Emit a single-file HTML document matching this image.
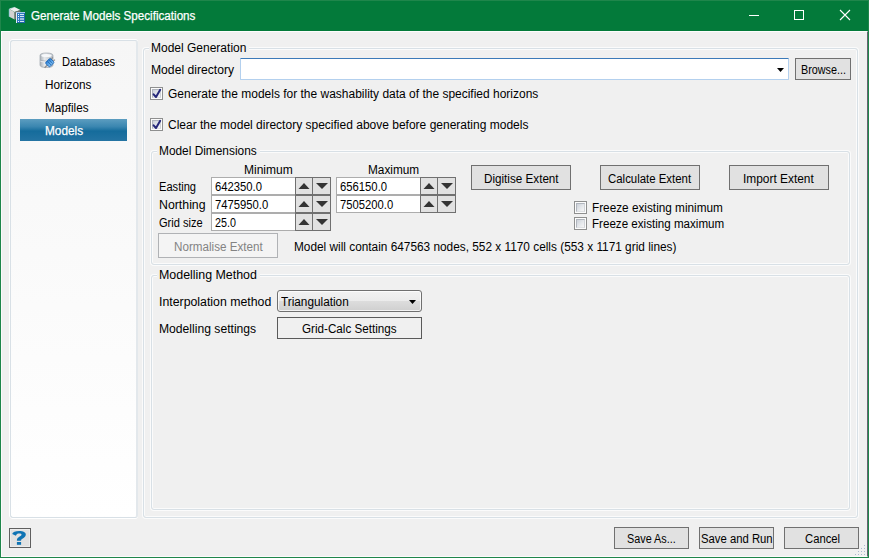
<!DOCTYPE html>
<html><head><meta charset="utf-8"><style>
html,body{margin:0;padding:0;width:869px;height:558px;overflow:hidden;background:#f0f0f0}
.b{position:absolute}
.t{position:absolute;white-space:nowrap;font-family:"Liberation Sans",sans-serif;font-size:12px;line-height:14px;transform-origin:0 0}
</style></head><body>
<div class="b" style="left:0px;top:0px;width:869px;height:558px;background:#1f864b"></div>
<div class="b" style="left:1px;top:1px;width:867px;height:30px;background:#037a3a"></div>
<div class="b" style="left:1px;top:31px;width:867px;height:526px;background:#f0f0f0;border-left:1px solid #fbfbfb;border-top:1px solid #fdfdfd;border-bottom:1px solid #fbfbfb;border-right:1px solid #646470;box-sizing:border-box"></div>
<div class="b" style="left:749px;top:15px;width:10px;height:1px;background:#fff"></div>
<div class="b" style="left:794px;top:10px;width:10px;height:10px;border:1px solid #fff;box-sizing:border-box"></div>
<svg class="b" style="left:838px;top:8px" width="14" height="14"><path d="M2 2 L12 12 M12 2 L2 12" stroke="#fff" stroke-width="1.1"/></svg>
<div class="b" style="left:10px;top:40px;width:128px;height:478px;background:linear-gradient(#f6f6f6,#ffffff);border:1px solid #d8e0e6;border-right:2px solid #e3e8ec;border-radius:3px;box-sizing:border-box;box-shadow:-1px 0 0 #fff,0 -1px 0 #fff,0 1px 0 #fff"></div>
<div class="b" style="left:20px;top:119px;width:107px;height:22px;background:linear-gradient(#5c9dc0 0%,#3a86b0 35%,#156c9c 55%,#2474a3 100%)"></div>
<div class="b" style="left:143px;top:48px;width:715px;height:470px;border:1px solid #d8e0e6;border-radius:3px;box-sizing:border-box;box-shadow:inset 0 0 0 1px #fbfbfb, 0 0 0 1px #fbfbfb"></div>
<div class="b" style="left:151px;top:151px;width:699px;height:114px;border:1px solid #d8e0e6;border-radius:3px;box-sizing:border-box;box-shadow:inset 0 0 0 1px #fbfbfb, 0 0 0 1px #fbfbfb"></div>
<div class="b" style="left:151px;top:275px;width:699px;height:235px;border:1px solid #d8e0e6;border-radius:3px;box-sizing:border-box;box-shadow:inset 0 0 0 1px #fbfbfb, 0 0 0 1px #fbfbfb"></div>
<div class="b" style="left:149px;top:40px;width:100px;height:16px;background:#f0f0f0"></div>
<div class="b" style="left:157px;top:143px;width:103px;height:15px;background:#f0f0f0"></div>
<div class="b" style="left:157px;top:269px;width:103px;height:15px;background:#f0f0f0"></div>
<div class="b" style="left:240px;top:58px;width:549px;height:22px;background:#fff;border:1px solid #b3d0ee;box-sizing:border-box;border-top-color:#3c7ab9;border-radius:1px"></div>
<svg class="b" style="left:777px;top:68px" width="8" height="5"><path d="M0 0 H7 L3.5 4 Z" fill="#000"/></svg>
<div class="b" style="left:795px;top:58px;width:56px;height:22px;background:#e1e1e1;border:1px solid #707070;box-sizing:border-box"></div>
<div class="b" style="left:150px;top:87px;width:13px;height:13px;background:#fcfcfc;border:1px solid #8e8f8f;box-sizing:border-box"></div><div class="b" style="left:152px;top:89px;width:9px;height:9px;background:linear-gradient(135deg,#ccd1d9 0%,#e3e6ea 50%,#f6f6f6 100%);border:1px solid;border-color:#b0b5bd #d0d3d8 #dfe1e4 #b0b5bd;box-sizing:border-box"></div><svg class="b" style="left:150px;top:87px" width="13" height="13"><path d="M3.6 7.3 L6 10 L10.2 2.8" stroke="#26287a" stroke-width="2" fill="none" stroke-linecap="round" stroke-linejoin="round"/></svg>
<div class="b" style="left:150px;top:118px;width:13px;height:13px;background:#fcfcfc;border:1px solid #8e8f8f;box-sizing:border-box"></div><div class="b" style="left:152px;top:120px;width:9px;height:9px;background:linear-gradient(135deg,#ccd1d9 0%,#e3e6ea 50%,#f6f6f6 100%);border:1px solid;border-color:#b0b5bd #d0d3d8 #dfe1e4 #b0b5bd;box-sizing:border-box"></div><svg class="b" style="left:150px;top:118px" width="13" height="13"><path d="M3.6 7.3 L6 10 L10.2 2.8" stroke="#26287a" stroke-width="2" fill="none" stroke-linecap="round" stroke-linejoin="round"/></svg>
<div class="b" style="left:574px;top:201px;width:13px;height:13px;background:#fcfcfc;border:1px solid #8e8f8f;box-sizing:border-box"></div><div class="b" style="left:576px;top:203px;width:9px;height:9px;background:linear-gradient(135deg,#ccd1d9 0%,#e3e6ea 50%,#f6f6f6 100%);border:1px solid;border-color:#b0b5bd #d0d3d8 #dfe1e4 #b0b5bd;box-sizing:border-box"></div>
<div class="b" style="left:574px;top:217px;width:13px;height:13px;background:#fcfcfc;border:1px solid #8e8f8f;box-sizing:border-box"></div><div class="b" style="left:576px;top:219px;width:9px;height:9px;background:linear-gradient(135deg,#ccd1d9 0%,#e3e6ea 50%,#f6f6f6 100%);border:1px solid;border-color:#b0b5bd #d0d3d8 #dfe1e4 #b0b5bd;box-sizing:border-box"></div>
<div class="b" style="left:211px;top:177px;width:85px;height:18px;background:#fff;border:1px solid #adadad;box-sizing:border-box"></div><div class="b" style="left:295px;top:177px;width:18px;height:18px;background:#e1e1e1;border:1px solid #707070;box-sizing:border-box"></div><div class="b" style="left:312px;top:177px;width:19px;height:18px;background:#e1e1e1;border:1px solid #707070;box-sizing:border-box"></div><svg class="b" style="left:298px;top:183px" width="13" height="8"><path d="M0.5 6 H11.5 L6 0 Z" fill="#333"/></svg><svg class="b" style="left:316px;top:183px" width="13" height="8"><path d="M0 0 H12 L6 6 Z" fill="#333"/></svg>
<div class="b" style="left:211px;top:195px;width:85px;height:18px;background:#fff;border:1px solid #adadad;box-sizing:border-box"></div><div class="b" style="left:295px;top:195px;width:18px;height:18px;background:#e1e1e1;border:1px solid #707070;box-sizing:border-box"></div><div class="b" style="left:312px;top:195px;width:19px;height:18px;background:#e1e1e1;border:1px solid #707070;box-sizing:border-box"></div><svg class="b" style="left:298px;top:201px" width="13" height="8"><path d="M0.5 6 H11.5 L6 0 Z" fill="#333"/></svg><svg class="b" style="left:316px;top:201px" width="13" height="8"><path d="M0 0 H12 L6 6 Z" fill="#333"/></svg>
<div class="b" style="left:211px;top:213px;width:85px;height:18px;background:#fff;border:1px solid #adadad;box-sizing:border-box"></div><div class="b" style="left:295px;top:213px;width:18px;height:18px;background:#e1e1e1;border:1px solid #707070;box-sizing:border-box"></div><div class="b" style="left:312px;top:213px;width:19px;height:18px;background:#e1e1e1;border:1px solid #707070;box-sizing:border-box"></div><svg class="b" style="left:298px;top:219px" width="13" height="8"><path d="M0.5 6 H11.5 L6 0 Z" fill="#333"/></svg><svg class="b" style="left:316px;top:219px" width="13" height="8"><path d="M0 0 H12 L6 6 Z" fill="#333"/></svg>
<div class="b" style="left:336px;top:177px;width:85px;height:18px;background:#fff;border:1px solid #adadad;box-sizing:border-box"></div><div class="b" style="left:420px;top:177px;width:18px;height:18px;background:#e1e1e1;border:1px solid #707070;box-sizing:border-box"></div><div class="b" style="left:437px;top:177px;width:19px;height:18px;background:#e1e1e1;border:1px solid #707070;box-sizing:border-box"></div><svg class="b" style="left:423px;top:183px" width="13" height="8"><path d="M0.5 6 H11.5 L6 0 Z" fill="#333"/></svg><svg class="b" style="left:441px;top:183px" width="13" height="8"><path d="M0 0 H12 L6 6 Z" fill="#333"/></svg>
<div class="b" style="left:336px;top:195px;width:85px;height:18px;background:#fff;border:1px solid #adadad;box-sizing:border-box"></div><div class="b" style="left:420px;top:195px;width:18px;height:18px;background:#e1e1e1;border:1px solid #707070;box-sizing:border-box"></div><div class="b" style="left:437px;top:195px;width:19px;height:18px;background:#e1e1e1;border:1px solid #707070;box-sizing:border-box"></div><svg class="b" style="left:423px;top:201px" width="13" height="8"><path d="M0.5 6 H11.5 L6 0 Z" fill="#333"/></svg><svg class="b" style="left:441px;top:201px" width="13" height="8"><path d="M0 0 H12 L6 6 Z" fill="#333"/></svg>
<div class="b" style="left:471px;top:165px;width:100px;height:25px;background:#e1e1e1;border:1px solid #707070;box-sizing:border-box"></div>
<div class="b" style="left:600px;top:165px;width:100px;height:25px;background:#e1e1e1;border:1px solid #707070;box-sizing:border-box"></div>
<div class="b" style="left:729px;top:165px;width:100px;height:25px;background:#e1e1e1;border:1px solid #707070;box-sizing:border-box"></div>
<div class="b" style="left:158px;top:233px;width:120px;height:25px;background:#f4f4f4;border:1px solid #b0b2b5;box-sizing:border-box"></div>
<div class="b" style="left:277px;top:290px;width:145px;height:22px;background:linear-gradient(#f2f2f2 0%,#ebebeb 50%,#dddddd 50%,#cfcfcf 100%);border:1px solid #707070;border-radius:3px;box-sizing:border-box;box-shadow:inset 0 0 0 1px rgba(255,255,255,0.75)"></div>
<svg class="b" style="left:409px;top:300px" width="8" height="5"><path d="M0 0 H7 L3.5 4 Z" fill="#000"/></svg>
<div class="b" style="left:277px;top:317px;width:145px;height:22px;background:#f0f0f0;border:1px solid #5a5a5a;box-sizing:border-box"></div>
<div class="b" style="left:614px;top:527px;width:75px;height:22px;background:#e1e1e1;border:1px solid #707070;box-sizing:border-box"></div>
<div class="b" style="left:699px;top:527px;width:75px;height:22px;background:#e1e1e1;border:1px solid #707070;box-sizing:border-box"></div>
<div class="b" style="left:784px;top:527px;width:75px;height:22px;background:#e1e1e1;border:1px solid #707070;box-sizing:border-box"></div>
<div class="b" style="left:9px;top:528px;width:22px;height:20px;background:#e1e1e1;border:1px solid #5f5f5f;box-sizing:border-box;box-shadow:inset 0 0 0 1px #ececec"></div>
<svg class="b" style="left:8px;top:527px" width="24" height="22" viewBox="8 527 24 22"><path d="M12.2 534 C12.6 531.9 15.4 530.9 19.2 530.9 C23.2 530.9 25.8 532.2 25.8 534.6 C25.8 536.8 24 537.8 22.4 538.8 C21.4 539.4 21.1 539.8 21.1 540.8 L16.9 540.8 C16.9 539 17.4 538 19 537 C20.6 536 21.5 535.6 21.5 534.6 C21.5 533.8 20.6 533.5 19.2 533.5 C17.5 533.5 16.4 534 15.9 535.8 Z" fill="#0e73b4"/><rect x="16.9" y="542" width="4.2" height="2.8" fill="#0e73b4"/></svg>
<svg class="b" style="left:6px;top:4px" width="22" height="22" viewBox="6 4 22 22">
<path d="M9.3 9 L15 7.3 L20.4 10 L14.6 11.9 Z" fill="#eeeeee"/>
<path d="M9.3 9 L14.6 11.9 L14.6 19.6 L9.3 16.7 Z" fill="#d2d2d2"/>
<path d="M14.6 11.9 L20.4 10 L20.4 17.8 L14.6 19.6 Z" fill="#707070"/>
<path d="M9.3 9.2 L9.3 16.6" stroke="#b4d2ee" stroke-width="0.9"/>
<path d="M9.4 8.9 L15 7.3" stroke="#d6e6f4" stroke-width="0.7"/>
<rect x="16" y="12" width="9" height="11" fill="#1f64ab"/>
<rect x="16" y="12" width="1" height="11" fill="#e6eef7"/>
<rect x="16" y="12" width="9" height="1" fill="#a6c9ea"/>
<rect x="17" y="13" width="7" height="9" fill="#3079bf"/>
<rect x="18" y="14" width="1" height="1" fill="#ffffff"/><rect x="20" y="14" width="4" height="1" fill="#d8e6f3"/>
<rect x="18" y="16" width="1" height="1" fill="#ffffff"/><rect x="20" y="16" width="4" height="1" fill="#d8e6f3"/>
<rect x="18" y="18" width="1" height="2" fill="#b9d3ea"/><rect x="20" y="18" width="4" height="2" fill="#9cbfe0"/>
<rect x="18" y="21" width="1" height="1" fill="#ffffff"/><rect x="20" y="21" width="4" height="1" fill="#d8e6f3"/>
</svg>
<svg class="b" style="left:36px;top:50px" width="24" height="22" viewBox="36 50 24 22">
<defs><linearGradient id="cyl" x1="0" x2="1"><stop offset="0" stop-color="#a9b0b7"/><stop offset="0.35" stop-color="#e6e9ec"/><stop offset="1" stop-color="#b3bac1"/></linearGradient>
<linearGradient id="plg" x1="0" y1="0" x2="0" y2="1"><stop offset="0" stop-color="#2a82d8"/><stop offset="1" stop-color="#86c3f3"/></linearGradient></defs>
<path d="M40 55.5 Q40 53 46.5 53 Q53 53 53 55.5 L53 65 Q53 67.5 46.5 67.5 Q40 67.5 40 65 Z" fill="url(#cyl)" stroke="#9ca4ac" stroke-width="0.7"/>
<ellipse cx="46.5" cy="55.6" rx="5.2" ry="1.5" fill="#f6f8fa"/>
<path d="M40.3 60.3 Q46.5 62.3 52.7 60.3" stroke="#a0a8b0" stroke-width="0.7" fill="none"/>
<path d="M40.3 61.3 Q46.5 63.3 52.7 61.3" stroke="#f2f4f6" stroke-width="0.7" fill="none"/>
<g transform="rotate(-45 49.8 62.6)">
<rect x="42.5" y="62" width="4" height="1.2" fill="#8a8a8a"/>
<rect x="53" y="60.6" width="2.6" height="1.1" fill="#8f8f8f"/>
<rect x="53" y="63.5" width="2.6" height="1.1" fill="#8f8f8f"/>
<rect x="46.3" y="59.6" width="6.9" height="6" rx="1.2" fill="url(#plg)" stroke="#1b63b5" stroke-width="0.8"/>
<path d="M49 60 V65.2 M51.2 60 V65.2" stroke="#1d5fa8" stroke-width="0.7"/>
</g>
</svg>
<div class="b" style="left:864px;top:545px;width:1px;height:1px;background:#a9b9cf"></div>
<div class="b" style="left:861px;top:548px;width:1px;height:1px;background:#a9b9cf"></div>
<div class="b" style="left:864px;top:548px;width:1px;height:1px;background:#a9b9cf"></div>
<div class="b" style="left:858px;top:551px;width:1px;height:1px;background:#a9b9cf"></div>
<div class="b" style="left:861px;top:551px;width:1px;height:1px;background:#a9b9cf"></div>
<div class="b" style="left:864px;top:551px;width:1px;height:1px;background:#a9b9cf"></div>
<div class="b" style="left:855px;top:554px;width:1px;height:1px;background:#a9b9cf"></div>
<div class="b" style="left:858px;top:554px;width:1px;height:1px;background:#a9b9cf"></div>
<div class="b" style="left:861px;top:554px;width:1px;height:1px;background:#a9b9cf"></div>
<div class="b" style="left:864px;top:554px;width:1px;height:1px;background:#a9b9cf"></div>
<div class="t" style="left:31.0px;top:9.0px;color:#ffffff;transform:scaleX(0.9704);-webkit-text-stroke:0.25px #fff">Generate Models Specifications</div>
<div class="t" style="left:62.0px;top:55.0px;color:#000;transform:scaleX(0.9263)">Databases</div>
<div class="t" style="left:45.4px;top:78.0px;color:#000;transform:scaleX(0.9809)">Horizons</div>
<div class="t" style="left:45.4px;top:101.0px;color:#000;transform:scaleX(0.9733)">Mapfiles</div>
<div class="t" style="left:45.4px;top:124.0px;color:#fff;transform:scaleX(0.9846);-webkit-text-stroke:0.25px #fff">Models</div>
<div class="t" style="left:151.0px;top:41.0px;color:#000;transform:scaleX(1.0000)">Model Generation</div>
<div class="t" style="left:151.0px;top:63.0px;color:#000;transform:scaleX(1.0122)">Model directory</div>
<div class="t" style="left:801.0px;top:63.0px;color:#000;transform:scaleX(0.9000)">Browse...</div>
<div class="t" style="left:167.6px;top:87.0px;color:#000;transform:scaleX(0.9984)">Generate the models for the washability data of the specified horizons</div>
<div class="t" style="left:167.8px;top:118.0px;color:#000;transform:scaleX(1.0006)">Clear the model directory specified above before generating models</div>
<div class="t" style="left:159.0px;top:144.0px;color:#000;transform:scaleX(0.9899)">Model Dimensions</div>
<div class="t" style="left:244.2px;top:163.0px;color:#000;transform:scaleX(1.0020)">Minimum</div>
<div class="t" style="left:367.8px;top:163.0px;color:#000;transform:scaleX(0.9846)">Maximum</div>
<div class="t" style="left:159.0px;top:180.0px;color:#000;transform:scaleX(0.9250)">Easting</div>
<div class="t" style="left:159.0px;top:198.0px;color:#000;transform:scaleX(1.0267)">Northing</div>
<div class="t" style="left:159.0px;top:216.0px;color:#000;transform:scaleX(0.9229)">Grid size</div>
<div class="t" style="left:214.7px;top:179.5px;color:#000;transform:scaleX(0.9380)">642350.0</div>
<div class="t" style="left:214.7px;top:197.5px;color:#000;transform:scaleX(0.9386)">7475950.0</div>
<div class="t" style="left:214.5px;top:215.5px;color:#000;transform:scaleX(0.8958)">25.0</div>
<div class="t" style="left:339.7px;top:179.5px;color:#000;transform:scaleX(0.9400)">656150.0</div>
<div class="t" style="left:339.7px;top:197.5px;color:#000;transform:scaleX(0.9368)">7505200.0</div>
<div class="t" style="left:483.5px;top:171.5px;color:#000;transform:scaleX(0.9727)">Digitise Extent</div>
<div class="t" style="left:607.9px;top:171.5px;color:#000;transform:scaleX(0.9511)">Calculate Extent</div>
<div class="t" style="left:743.3px;top:171.5px;color:#000;transform:scaleX(0.9917)">Import Extent</div>
<div class="t" style="left:592.0px;top:201.0px;color:#000;transform:scaleX(0.9812)">Freeze existing minimum</div>
<div class="t" style="left:592.0px;top:217.0px;color:#000;transform:scaleX(0.9672)">Freeze existing maximum</div>
<div class="t" style="left:173.8px;top:239.5px;color:#838383;transform:scaleX(0.9707)">Normalise Extent</div>
<div class="t" style="left:293.7px;top:240.0px;color:#000;transform:scaleX(0.9861)">Model will contain 647563 nodes, 552 x 1170 cells (553 x 1171 grid lines)</div>
<div class="t" style="left:158.7px;top:268.0px;color:#000;transform:scaleX(1.0337)">Modelling Method</div>
<div class="t" style="left:159.0px;top:294.5px;color:#000;transform:scaleX(1.0266)">Interpolation method</div>
<div class="t" style="left:159.0px;top:321.5px;color:#000;transform:scaleX(1.0115)">Modelling settings</div>
<div class="t" style="left:281.4px;top:294.5px;color:#000;transform:scaleX(0.9826)">Triangulation</div>
<div class="t" style="left:302.0px;top:322.0px;color:#000;transform:scaleX(0.9722)">Grid-Calc Settings</div>
<div class="t" style="left:626.7px;top:531.5px;color:#000;transform:scaleX(0.9019)">Save As...</div>
<div class="t" style="left:700.7px;top:531.5px;color:#000;transform:scaleX(0.9421)">Save and Run</div>
<div class="t" style="left:804.5px;top:531.5px;color:#000;transform:scaleX(0.9378)">Cancel</div>
</body></html>
